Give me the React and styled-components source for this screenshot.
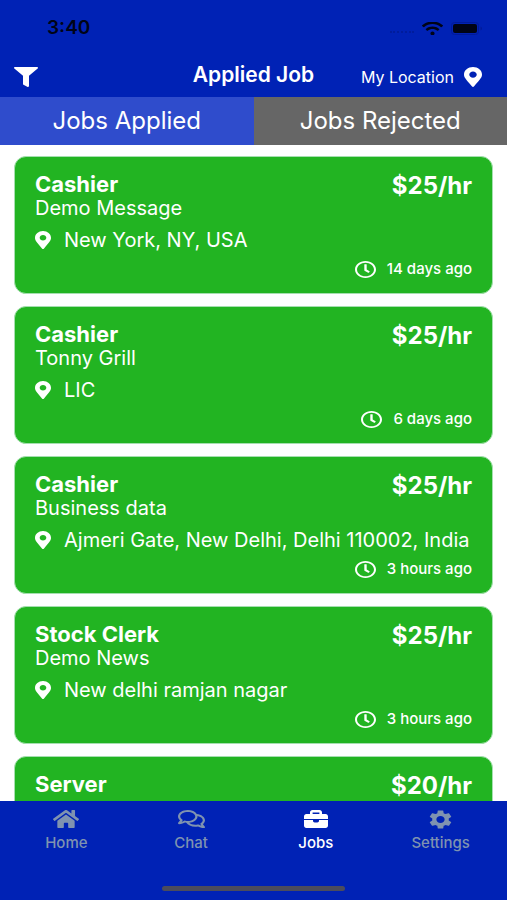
import React, { useState } from "react";
import styled, { createGlobalStyle } from "styled-components";
import { FaFilter, FaHome, FaMapMarkerAlt, FaRegClock, FaRegComments, FaWifi } from "react-icons/fa";
import { MdSettings } from "react-icons/md";

const Briefcase = (props) => (
  <svg {...props} fill="currentColor">
    <path d="M6 4V2.6C6 1 7 0 8.6 0h6.8C17 0 18 1 18 2.6V4h3.6C23 4 24 5 24 6.4V9H0V6.400C0 5 1 4 2.400 4zm2.600 0h6.800V2.400H8.600z" />
    <path d="M0 10h9v.8c0 1 .7 1.700 1.700 1.700h2.600c1 0 1.700-.7 1.700-1.700V10h9v5.600c0 1.400-1 2.400-2.400 2.400H2.400C1 18 0 17 0 15.600z" />
  </svg>
);

const jobs = [
  { id: 1, title: "Cashier", company: "Demo Message", place: "New York, NY, USA", pay: "$25/hr", time: "14 days ago" },
  { id: 2, title: "Cashier", company: "Tonny Grill", place: "LIC", pay: "$25/hr", time: "6 days ago" },
  { id: 3, title: "Cashier", company: "Business data", place: "Ajmeri Gate, New Delhi, Delhi 110002, India", pay: "$25/hr", time: "3 hours ago" },
  { id: 4, title: "Stock Clerk", company: "Demo News", place: "New delhi ramjan nagar", pay: "$25/hr", time: "3 hours ago" },
  { id: 5, title: "Server", company: "", place: "", pay: "$20/hr", time: "" },
];

const links = [
  { name: "Home", icon: FaHome, viewBox: "0 32 576 448", width: 26, height: 18 },
  { name: "Chat", icon: FaRegComments, viewBox: "0 32 576 448", width: 27, height: 18 },
  { name: "Jobs", icon: Briefcase, viewBox: "0 0 24 18", width: 24, height: 18 },
  { name: "Settings", icon: MdSettings, viewBox: "2 2 20 20", width: 23, height: 19 },
];

const JobCard = ({ job }) => (
  <Card>
    <CardTop>
      <Title>{job.title}</Title>
      <Pay>{job.pay}</Pay>
    </CardTop>
    {job.company && <Company>{job.company}</Company>}
    {job.place && (
      <Place>
        <Icon $width={16} $height={18}>
          <FaMapMarkerAlt viewBox="0 0 384 512" preserveAspectRatio="none" />
        </Icon>
        {job.place}
      </Place>
    )}
    {job.time && (
      <Time>
        <Icon $width={21} $height={17}>
          <FaRegClock viewBox="8 8 496 496" preserveAspectRatio="none" />
        </Icon>
        {job.time}
      </Time>
    )}
  </Card>
);

export default function App() {
  const [tab, setTab] = useState("applied");

  return (
    <>
      <GlobalStyle />
      <Screen>
        <StatusBar>
          <Clock>3:40</Clock>
          <StatusIcons>
            <Dots />
            <Icon $width={21} $height={13}>
              <FaWifi viewBox="0 48 640 416" preserveAspectRatio="none" />
            </Icon>
            <Battery viewBox="0 0 32 13">
              <rect x="0.5" y="0.5" width="27" height="12" rx="3" fill="none" stroke="#001a9a" />
              <rect x="2" y="2" width="24" height="9" rx="2" fill="#000416" />
              <path d="M29.5 4.5v4c2-.8 2-3.2 0-4z" fill="#001a9a" />
            </Battery>
          </StatusIcons>
        </StatusBar>
        <Header>
          <FilterButton aria-label="Filter">
            <Icon $width={24} $height={20}>
              <FaFilter preserveAspectRatio="none" />
            </Icon>
          </FilterButton>
          <Heading>Applied Job</Heading>
          <LocationButton>
            My Location
            <Icon $width={18} $height={20}>
              <FaMapMarkerAlt preserveAspectRatio="none" />
            </Icon>
          </LocationButton>
        </Header>
        <Tabs>
          <Tab $active={tab === "applied"} onClick={() => setTab("applied")}>Jobs Applied</Tab>
          <Tab $active={tab === "rejected"} onClick={() => setTab("rejected")}>Jobs Rejected</Tab>
        </Tabs>
        <List>
          {tab === "applied" && jobs.map((job) => <JobCard key={job.id} job={job} />)}
        </List>
        <Footer>
          <Nav>
            {links.map(({ name, icon: Glyph, viewBox, width, height }) => (
              <NavLink key={name} href={`#${name.toLowerCase()}`} $active={name === "Jobs"}>
                <IconBox>
                  <Icon $width={width} $height={height}>
                    <Glyph viewBox={viewBox} preserveAspectRatio="none" />
                  </Icon>
                </IconBox>
                {name}
              </NavLink>
            ))}
          </Nav>
          <HomeBar />
        </Footer>
      </Screen>
    </>
  );
}

const GlobalStyle = createGlobalStyle`
  * {
    box-sizing: border-box;
  }
  body {
    margin: 0;
    font-family: Inter, "Liberation Sans", sans-serif;
    color: #fff;
    background-color: #fff;
  }
  button {
    border: 0;
    padding: 0;
    font: inherit;
    color: inherit;
    background: none;
    cursor: pointer;
  }
  h1, h2, p {
    margin: 0;
  }
`;

const Screen = styled.div`
  display: flex;
  flex-direction: column;
  height: 100vh;
`;

const Icon = styled.span`
  flex-shrink: 0;

  & > svg {
    display: block;
    width: ${({ $width }) => $width}px;
    height: ${({ $height }) => $height}px;
  }
`;

const StatusBar = styled.div`
  display: flex;
  justify-content: space-between;
  align-items: center;
  padding: 16px 24px 16px 47px;
  color: #000416;
  background-color: #0022b5;
`;

const Clock = styled.span`
  font-size: 19px;
  line-height: 24px;
  font-weight: 600;
`;

const StatusIcons = styled.div`
  display: flex;
  align-items: center;
  gap: 8px;
`;

const Dots = styled.span`
  width: 24px;
  margin-top: 8px;
  border-top: 2px dotted #001c9c;
`;

const Battery = styled.svg`
  width: 32px;
  height: 13px;
`;

const Header = styled.header`
  display: grid;
  grid-template-columns: 1fr auto 1fr;
  align-items: center;
  height: 41px;
  padding: 0 14px 3px;
  background-color: #0022b5;
`;

const FilterButton = styled.button`
  justify-self: start;
  padding-top: 4px;
`;

const Heading = styled.h1`
  font-size: 21px;
  line-height: 24px;
  font-weight: 600;
`;

const LocationButton = styled.button`
  display: flex;
  justify-self: end;
  align-items: center;
  gap: 10px;
  padding: 4px 11px 0 0;
  font-size: 16px;
  line-height: 20px;
`;

const Tabs = styled.div`
  display: flex;
`;

const Tab = styled.button`
  flex: 1;
  height: 48px;
  font-size: 24px;
  line-height: 28px;
  background-color: ${({ $active }) => ($active ? "#2f4ccc" : "#666")};
`;

const List = styled.main`
  display: flex;
  flex: 1;
  flex-direction: column;
  gap: 12px;
  min-height: 0;
  padding: 11px 14px;
  overflow-y: auto;
  scrollbar-width: none;
`;

const Card = styled.article`
  flex-shrink: 0;
  min-height: 138px;
  padding: 15px 20px 14px;
  border: 1px solid #a6dfb0;
  border-radius: 12px;
  background-color: #22b422;
`;

const CardTop = styled.div`
  display: flex;
  justify-content: space-between;
  align-items: flex-start;
`;

const Title = styled.h2`
  font-size: 22px;
  line-height: 24px;
  font-weight: 700;
`;

const Pay = styled.span`
  height: 24px;
  font-size: 24px;
  line-height: 28px;
  font-weight: 700;
`;

const Company = styled.p`
  font-size: 20px;
  line-height: 24px;
`;

const Place = styled.p`
  display: flex;
  align-items: center;
  gap: 13px;
  padding-top: 8px;
  font-size: 20px;
  line-height: 24px;
  white-space: nowrap;
`;

const Time = styled.p`
  display: flex;
  justify-content: flex-end;
  align-items: center;
  gap: 11px;
  padding-top: 7px;
  font-size: 15px;
  line-height: 20px;
  font-weight: 500;
`;

const Footer = styled.footer`
  padding-bottom: 9px;
  background-color: #0022b5;
`;

const Nav = styled.nav`
  display: flex;
  padding: 8px 4px 33px;
`;

const NavLink = styled.a`
  display: flex;
  flex: 1;
  flex-direction: column;
  align-items: center;
  gap: 4px;
  font-size: 15px;
  line-height: 20px;
  font-weight: 500;
  text-decoration: none;
  color: ${({ $active }) => ($active ? "#fff" : "#7f93b0")};
`;

const IconBox = styled.span`
  display: flex;
  align-items: center;
  height: 20px;
`;

const HomeBar = styled.div`
  width: 36%;
  height: 5px;
  margin: 0 auto;
  border-radius: 3px;
  background-color: #4b4c5c;
`;
